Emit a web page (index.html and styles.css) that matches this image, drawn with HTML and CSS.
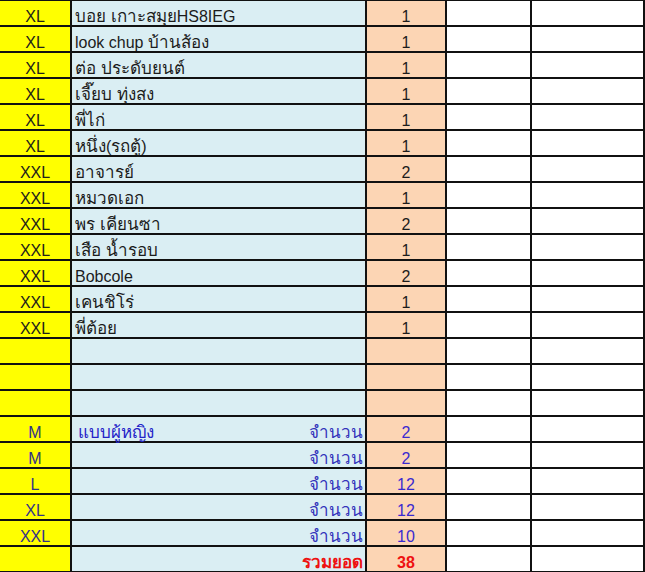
FILE: index.html
```html
<!DOCTYPE html>
<html>
<head>
<meta charset="utf-8">
<link rel="stylesheet" href="styles.css">
</head>
<body>
<div class="sheet">
  <div class="c sz">XL</div><div class="c nm"><span class="th">บอย เกาะสมุย</span>HS8IEG</div><div class="c qt">1</div><div class="c w"></div><div class="c w"></div>
  <div class="c sz">XL</div><div class="c nm">look chup&nbsp;<span class="th">บ้านส้อง</span></div><div class="c qt">1</div><div class="c w"></div><div class="c w"></div>
  <div class="c sz">XL</div><div class="c nm"><span class="th">ต่อ ประดับยนต์</span></div><div class="c qt">1</div><div class="c w"></div><div class="c w"></div>
  <div class="c sz">XL</div><div class="c nm"><span class="th">เจี๊ยบ ทุ่งสง</span></div><div class="c qt">1</div><div class="c w"></div><div class="c w"></div>
  <div class="c sz">XL</div><div class="c nm"><span class="th">พี่ไก่</span></div><div class="c qt">1</div><div class="c w"></div><div class="c w"></div>
  <div class="c sz">XL</div><div class="c nm"><span class="th">หนึ่ง</span>(<span class="th">รถตู้</span>)</div><div class="c qt">1</div><div class="c w"></div><div class="c w"></div>
  <div class="c sz">XXL</div><div class="c nm"><span class="th">อาจารย์</span></div><div class="c qt">2</div><div class="c w"></div><div class="c w"></div>
  <div class="c sz">XXL</div><div class="c nm"><span class="th">หมวดเอก</span></div><div class="c qt">1</div><div class="c w"></div><div class="c w"></div>
  <div class="c sz">XXL</div><div class="c nm"><span class="th">พร เคียนซา</span></div><div class="c qt">2</div><div class="c w"></div><div class="c w"></div>
  <div class="c sz">XXL</div><div class="c nm"><span class="th">เสือ น้ำรอบ</span></div><div class="c qt">1</div><div class="c w"></div><div class="c w"></div>
  <div class="c sz">XXL</div><div class="c nm">Bobcole</div><div class="c qt">2</div><div class="c w"></div><div class="c w"></div>
  <div class="c sz">XXL</div><div class="c nm"><span class="th">เคนชิโร่</span></div><div class="c qt">1</div><div class="c w"></div><div class="c w"></div>
  <div class="c sz">XXL</div><div class="c nm"><span class="th">พี่ต้อย</span></div><div class="c qt">1</div><div class="c w"></div><div class="c w"></div>
  <div class="c sz"></div><div class="c nm"></div><div class="c qt"></div><div class="c w"></div><div class="c w"></div>
  <div class="c sz"></div><div class="c nm"></div><div class="c qt"></div><div class="c w"></div><div class="c w"></div>
  <div class="c sz"></div><div class="c nm"></div><div class="c qt"></div><div class="c w"></div><div class="c w"></div>
  <div class="c sz blue">M</div><div class="c nm split"><span class="th women">แบบผู้หญิง</span><span class="th lbl">จำนวน</span></div><div class="c qt bq">2</div><div class="c w"></div><div class="c w"></div>
  <div class="c sz blue">M</div><div class="c nm right"><span class="th lbl">จำนวน</span></div><div class="c qt bq">2</div><div class="c w"></div><div class="c w"></div>
  <div class="c sz blue">L</div><div class="c nm right"><span class="th lbl">จำนวน</span></div><div class="c qt bq">12</div><div class="c w"></div><div class="c w"></div>
  <div class="c sz blue">XL</div><div class="c nm right"><span class="th lbl">จำนวน</span></div><div class="c qt bq">12</div><div class="c w"></div><div class="c w"></div>
  <div class="c sz blue">XXL</div><div class="c nm right"><span class="th lbl">จำนวน</span></div><div class="c qt bq">10</div><div class="c w"></div><div class="c w"></div>
  <div class="c sz"></div><div class="c nm right"><span class="th total">รวมยอด</span></div><div class="c qt total">38</div><div class="c w"></div><div class="c w"></div>
</div>
</body>
</html>
```

FILE: styles.css
```css
html, body {
  margin: 0;
  padding: 0;
  background: #ffffff;
  overflow: hidden;
}
.sheet {
  display: grid;
  grid-template-columns: 70px 293px 78px 83px 111px;
  grid-auto-rows: 24px;
  gap: 2px;
  width: 643px;
  padding: 1px 2px 2px 0;
  background: #111111;
  font-family: "Liberation Sans", Tahoma, sans-serif;
  font-size: 16px;
  color: #1c1c1c;
}
.c {
  display: flex;
  align-items: flex-end;
  line-height: 16px;
  white-space: nowrap;
}
.th {
  font-size: 17px;
}
.sz {
  background: #ffff00;
  justify-content: center;
  color: #22221a;
}
.sz.blue {
  color: #333388;
}
.nm {
  background: #daeef3;
  padding-left: 3px;
}
.nm.split {
  justify-content: space-between;
  padding-left: 6px;
  padding-right: 2px;
}
.nm.right {
  justify-content: flex-end;
  padding-right: 2px;
}
.women {
  color: #2424c8;
}
.lbl {
  color: #3333bb;
}
.qt {
  background: #fcd5b4;
  justify-content: center;
}
.qt.bq {
  color: #3a2ad0;
}
.total {
  color: #ee1111;
  font-weight: bold;
}
.w {
  background: #ffffff;
}
```
